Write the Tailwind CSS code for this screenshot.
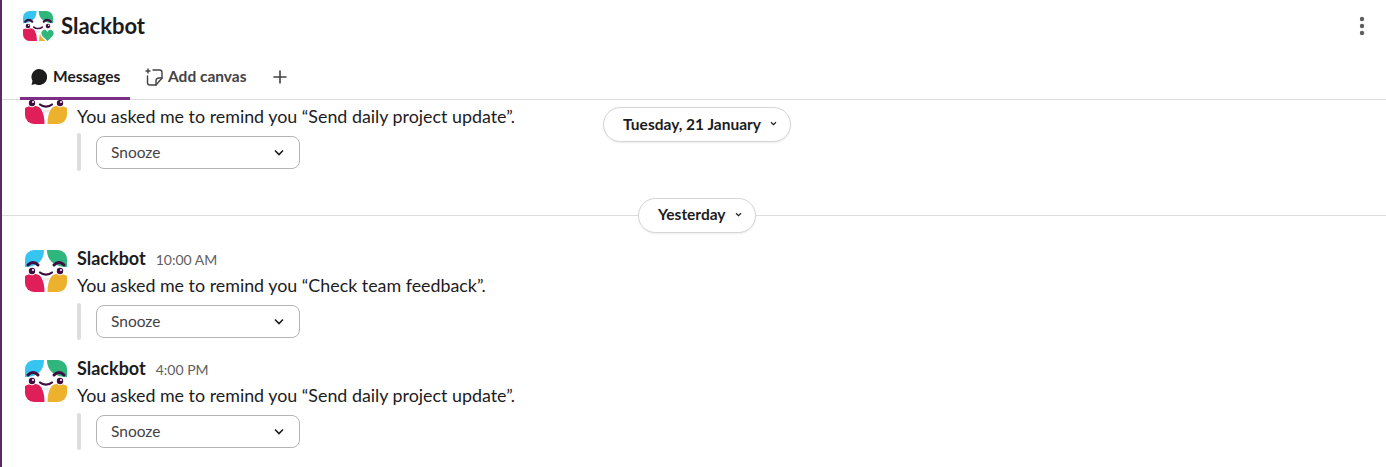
<!DOCTYPE html>
<html lang="en">
  <head>
    <meta charset="UTF-8" />
    <title>Slackbot</title>
    <script src="https://cdn.jsdelivr.net/npm/@tailwindcss/browser@4"></script>
  </head>
  <body class="bg-white text-[#1d1c1d] [font-family:Lato,sans-serif] overflow-hidden">
    <!-- shared avatar -->
    <svg class="hidden">
      <symbol id="slackbot-face" viewBox="0 0 42 42">
        <rect width="42" height="42" rx="9" fill="#fff" />
        <path d="M0 17V9a9 9 0 0 1 9-9h10c0 11-7 17-19 17z" fill="#36c5f0" />
        <path d="M42 17V9a9 9 0 0 0-9-9H22c0 11 8 17 20 17z" fill="#2eb67d" />
        <path d="M0 26c6-3 13-3 16 1 2.500 4 3.500 9 3.500 15H9a9 9 0 0 1-9-9z" fill="#e01e5a" />
        <path d="M42 26c-6-3-13-3-16 1-2.500 4-3.500 9-3.500 15H33a9 9 0 0 0 9-9z" fill="#ecb22e" />
        <path d="M3 15c3-3.500 7-3.500 10 0" fill="none" stroke="#3f0e40" stroke-width="3" stroke-linecap="round" />
        <path d="M29 15c3-3.500 7-3.500 10 0" fill="none" stroke="#3f0e40" stroke-width="3" stroke-linecap="round" />
        <circle cx="7" cy="21" r="4.200" fill="#fff" />
        <circle cx="35" cy="21" r="4.200" fill="#fff" />
        <circle cx="7" cy="21" r="3.200" fill="#3f0e40" />
        <circle cx="35" cy="21" r="3.200" fill="#3f0e40" />
        <circle cx="8" cy="20" r="1" fill="#fff" />
        <circle cx="36" cy="20" r="1" fill="#fff" />
        <ellipse cx="21" cy="29" rx="4" ry="1.600" fill="#ececec" />
        <path d="M15 22.500c3 2.800 9 2.800 12 0" fill="none" stroke="#3f0e40" stroke-width="2.200" stroke-linecap="round" />
      </symbol>
    </svg>

    <div class="h-[467px] border-l-2 border-[#5b2a66] flex flex-col">
      <!-- header -->
      <header class="h-[100px] shrink-0 border-b border-[#dcdcdc] flex flex-col">
        <div class="h-[52px] shrink-0 flex items-center pl-[21px] pr-[21px]">
          <div class="relative w-[30px] h-[30px]">
            <svg class="w-[30px] h-[30px]"><use href="#slackbot-face" /></svg>
            <svg class="absolute right-[-2px] bottom-[-2px] w-[15px] h-[15px]" viewBox="0 0 16 16">
              <path d="M8 15 2 9C-1 5 2 1 5 1c1.300 0 2.400.7 3 1.800C8.600 1.700 9.700 1 11 1c3 0 6 4 3 8z" fill="#2eb67d" stroke="#fff" stroke-width="1.500" />
            </svg>
          </div>
          <h1 class="ml-2 text-[22px] leading-none font-bold">Slackbot</h1>
          <svg class="ml-auto w-[6px] h-[20px]" viewBox="0 0 6 20" fill="#5e5d60">
            <circle cx="3" cy="3" r="2.200" />
            <circle cx="3" cy="10" r="2.200" />
            <circle cx="3" cy="17" r="2.200" />
          </svg>
        </div>
        <nav class="flex-1 min-h-0 flex items-stretch pl-[18px] text-[15.500px] font-bold">
          <a class="w-[110px] h-[48px] border-b-[3px] border-[#7c3085] flex items-center pl-[11px] gap-[6px] pt-[4px]">
            <svg class="w-[16px] h-[16px]" viewBox="0 0 16 16" fill="#1d1c1d">
              <path d="M8 0a8 8 0 1 1-3.800 15L.5 16l1-4A8 8 0 0 1 8 0z" />
            </svg>
            Messages
          </a>
          <a class="ml-[15px] h-[48px] flex items-center gap-[5px] text-[#454245] pt-[4px] pb-[3px]">
            <svg class="w-[18px] h-[18px]" viewBox="0 0 18 18" fill="none" stroke="#454245" stroke-width="1.400" stroke-linecap="round" stroke-linejoin="round">
              <path d="M3 1v4M1 3h4" />
              <path d="M8 2h6.500A2.500 2.500 0 0 1 17 4.500V10l-6 7H5a2.500 2.500 0 0 1-2.500-2.500V8" />
              <path d="M11 17v-4a3 3 0 0 1 3-3h3" />
            </svg>
            Add canvas
          </a>
          <button class="ml-[26px] h-[48px] pt-[4px] pb-[3px]">
            <svg class="w-[14px] h-[14px]" viewBox="0 0 14 14" stroke="#454245" stroke-width="1.600" stroke-linecap="round">
              <path d="M7 1v12M1 7h12" />
            </svg>
          </button>
        </nav>
      </header>

      <!-- messages -->
      <main class="relative flex-1 overflow-hidden">
        <button class="absolute z-10 top-[7px] left-[601px] w-[188px] h-[35px] rounded-full border border-[#d5d5d5] bg-white shadow-[0_1px_2px_rgba(0,0,0,0.08)] flex items-center pl-[19px] gap-[9px] text-[15.500px] font-bold">
          Tuesday, 21 January
          <svg class="w-[7px] h-[5px] -mt-[3px]" viewBox="0 0 8 6" fill="none" stroke="#1d1c1d" stroke-width="1.400"><path d="M1 1.500 4 4.500 7 1.500" /></svg>
        </button>

        <div class="-mt-[25px]">
          <!-- first message is scrolled under the header, its name row is out of view -->
          <article class="h-[110px] flex pl-[23px] pt-[7px]">
            <svg class="w-[42px] h-[42px] shrink-0"><use href="#slackbot-face" /></svg>
            <div class="ml-[10px] -mt-[2px]">
              <p class="mt-[23px] text-[17.850px] leading-[26px]">You asked me to remind you “Send daily project update”.</p>
              <div class="mt-[4px] flex gap-[15px]">
                <div class="w-[4px] h-[38px] rounded-sm bg-[#dddddd]"></div>
                <button class="mt-[3px] w-[204px] h-[33px] rounded-lg border border-[#b5b5b5] flex items-center justify-between pl-[14px] pr-[15px] text-[15.500px] text-[#454245]">
                  Snooze
                  <svg class="w-[10px] h-[7px]" viewBox="0 0 10 7" fill="none" stroke="#1d1c1d" stroke-width="1.600"><path d="M1 1.500 5 5.500 9 1.500" /></svg>
                </button>
              </div>
            </div>
          </article>

          <div class="relative h-[60px] flex items-center justify-center">
            <div class="absolute inset-x-0 top-[30px] border-t border-[#dddddd]"></div>
            <button class="relative ml-[6px] w-[118px] h-[35px] rounded-full border border-[#d5d5d5] bg-white shadow-[0_1px_2px_rgba(0,0,0,0.08)] flex items-center pl-[19px] gap-[9px] text-[15.500px] font-bold">
              Yesterday
              <svg class="w-[7px] h-[5px] -mt-[2px]" viewBox="0 0 8 6" fill="none" stroke="#1d1c1d" stroke-width="1.400"><path d="M1 1.500 4 4.500 7 1.500" /></svg>
            </button>
          </div>

          <article class="h-[110px] flex pl-[23px] pt-[5px]">
            <svg class="w-[42px] h-[42px] shrink-0"><use href="#slackbot-face" /></svg>
            <div class="ml-[10px]">
              <div class="h-[18px] -mt-px flex items-baseline gap-[10px] leading-[18px]">
                <span class="text-[18px] font-bold">Slackbot</span>
                <span class="text-sm text-[#616061]">10:00 AM</span>
              </div>
              <p class="mt-[5px] text-[17.850px] leading-[26px]">You asked me to remind you “Check team feedback”.</p>
              <div class="mt-[5px] flex gap-[15px]">
                <div class="w-[4px] h-[37px] rounded-sm bg-[#dddddd]"></div>
                <button class="mt-[2px] w-[204px] h-[33px] rounded-lg border border-[#b5b5b5] flex items-center justify-between pl-[14px] pr-[15px] text-[15.500px] text-[#454245]">
                  Snooze
                  <svg class="w-[10px] h-[7px]" viewBox="0 0 10 7" fill="none" stroke="#1d1c1d" stroke-width="1.600"><path d="M1 1.500 5 5.500 9 1.500" /></svg>
                </button>
              </div>
            </div>
          </article>

          <article class="h-[110px] flex pl-[23px] pt-[5px]">
            <svg class="w-[42px] h-[42px] shrink-0"><use href="#slackbot-face" /></svg>
            <div class="ml-[10px]">
              <div class="h-[18px] -mt-px flex items-baseline gap-[10px] leading-[18px]">
                <span class="text-[18px] font-bold">Slackbot</span>
                <span class="text-sm text-[#616061]">4:00 PM</span>
              </div>
              <p class="mt-[5px] text-[17.850px] leading-[26px]">You asked me to remind you “Send daily project update”.</p>
              <div class="mt-[5px] flex gap-[15px]">
                <div class="w-[4px] h-[37px] rounded-sm bg-[#dddddd]"></div>
                <button class="mt-[2px] w-[204px] h-[33px] rounded-lg border border-[#b5b5b5] flex items-center justify-between pl-[14px] pr-[15px] text-[15.500px] text-[#454245]">
                  Snooze
                  <svg class="w-[10px] h-[7px]" viewBox="0 0 10 7" fill="none" stroke="#1d1c1d" stroke-width="1.600"><path d="M1 1.500 5 5.500 9 1.500" /></svg>
                </button>
              </div>
            </div>
          </article>
        </div>
      </main>
    </div>
  </body>
</html>
